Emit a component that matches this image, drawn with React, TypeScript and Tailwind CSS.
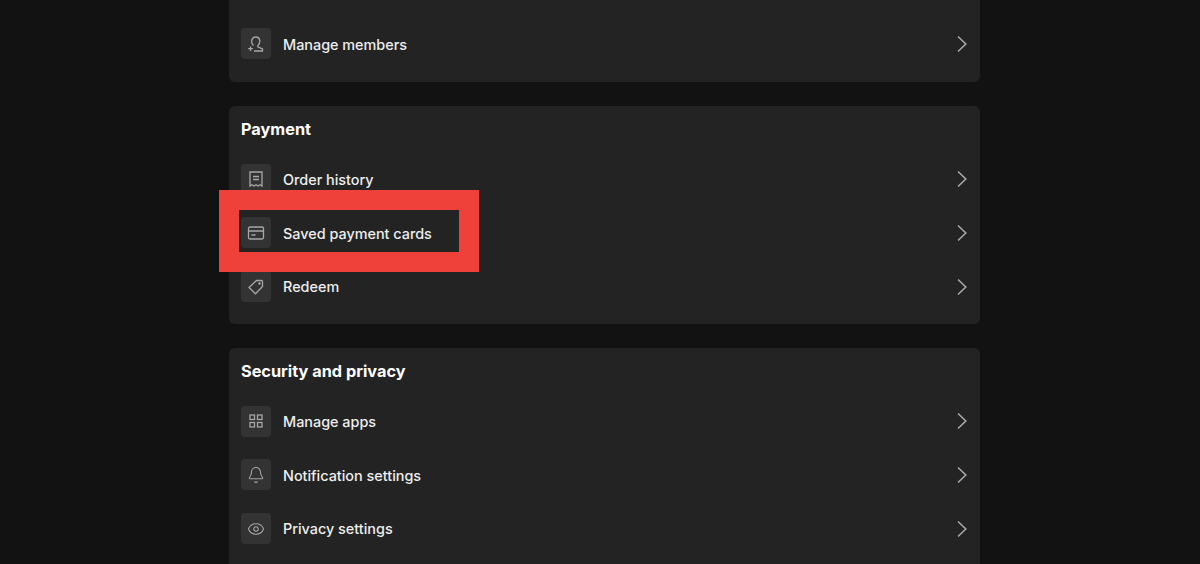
import { Bell, Eye } from "lucide-react";
import type { ReactNode } from "react";

function Ico({ children }: { children: ReactNode }) {
  return (
    <svg width="18" height="18" viewBox="0 0 18 18" fill="none" stroke="currentColor" strokeWidth="1.3">
      {children}
    </svg>
  );
}

const MembersIcon = () => (
  <Ico>
    <path d="M6.500 10.500c-1.200-1-1.900-2.500-1.900-4.200C4.600 3.700 6.400 2 8.700 2s4.100 1.700 4.100 4.300c0 1.700-.7 3.200-1.900 4.200v1.300l4.600 2.200v2H7" />
    <path d="M1.200 13.700h4.600M3.500 11.400V16" />
  </Ico>
);

const ReceiptIcon = () => (
  <Ico>
    <path d="M3 2h12v14l-2-1.200-2 1.200-2-1.200-2 1.200-2-1.200-2 1.200z" />
    <path d="M6 6.500h6M6 9.500h6" />
  </Ico>
);

const CardIcon = () => (
  <Ico>
    <rect x="1.500" y="3" width="15" height="12" rx="1.500" />
    <path d="M1.500 7h15M4.500 11h4" strokeWidth="1.500" />
  </Ico>
);

const TagIcon = () => (
  <Ico>
    <path d="M9.500 2.500h5a1 1 0 0 1 1 1v5L8.500 15.800 2 9.500z" />
    <circle cx="12.500" cy="5.500" r=".6" fill="currentColor" />
  </Ico>
);

const AppsIcon = () => (
  <Ico>
    <rect x="3" y="3" width="4.500" height="4.500" />
    <rect x="10.500" y="3" width="4.500" height="4.500" />
    <rect x="3" y="10.500" width="4.500" height="4.500" />
    <rect x="10.500" y="10.500" width="4.500" height="4.500" />
  </Ico>
);

function Row({ icon, label }: { icon: ReactNode; label: string }) {
  return (
    <div className="flex h-[53.7px] items-center">
      <div className="flex h-[31px] w-[30px] items-center justify-center rounded bg-[#333333] text-[#a7a7a7]">
        {icon}
      </div>
      <span className="ml-3 flex-1 pt-px text-[14.4px] font-medium text-[#eeeeee]">{label}</span>
      <svg width="12" height="18" viewBox="0 0 12 18" fill="none" stroke="#a7a7a7" strokeWidth="1.6">
        <path d="M2 1.500 9.800 9 2 16.500" />
      </svg>
    </div>
  );
}

function Card({ title, children, className }: { title?: string; children: ReactNode; className: string }) {
  return (
    <section className={`rounded-md bg-[#232323] pl-3 pr-3 ${className}`}>
      {title && <h2 className="text-[16.3px] font-bold text-white">{title}</h2>}
      {children}
    </section>
  );
}

export default function App() {
  return (
    <div className="relative h-[564px] w-[1200px] overflow-hidden bg-[#121212] font-['Inter',sans-serif]">
      <div className="ml-[229px] flex h-full w-[751px] flex-col gap-6">
        <Card className="-mt-[10px] h-[92px] shrink-0 pt-[27px]">
          <Row icon={<MembersIcon />} label="Manage members" />
        </Card>
        <Card title="Payment" className="h-[218px] shrink-0 pt-[11px]">
          <div className="mt-[11px]">
            <Row icon={<ReceiptIcon />} label="Order history" />
            <Row icon={<CardIcon />} label="Saved payment cards" />
            <Row icon={<TagIcon />} label="Redeem" />
          </div>
        </Card>
        <Card title="Security and privacy" className="h-[240px] shrink-0 pt-[11px]">
          <div className="mt-[11px]">
            <Row icon={<AppsIcon />} label="Manage apps" />
            <Row icon={<Bell size={18} strokeWidth={1.4} />} label="Notification settings" />
            <Row icon={<Eye size={18} strokeWidth={1.4} />} label="Privacy settings" />
          </div>
        </Card>
      </div>
      {/* red highlight over the saved cards row */}
      <div className="absolute left-[219px] top-[190px] h-[82px] w-[260px] border-[20px] border-[#f0403a]" />
    </div>
  );
}
